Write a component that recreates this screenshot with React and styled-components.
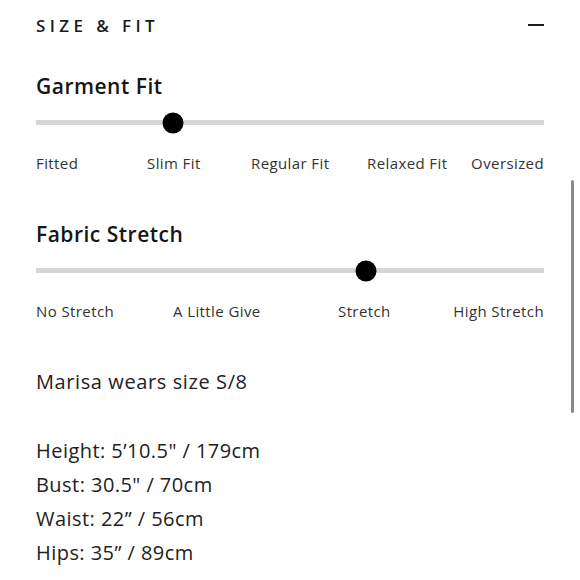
import styled, { createGlobalStyle } from 'styled-components';

const GlobalStyle = createGlobalStyle`
  html, body {
    margin: 0;
    padding: 0;
    background: #fff;
  }
  body {
    font-family: "Open Sans", "Noto Sans", sans-serif;
    color: #1a1a1a;
  }
`;

const sliders = [
  {
    title: 'Garment Fit',
    value: 27,
    cols: '111px 104px 116px 104px 1fr',
    labels: ['Fitted', 'Slim Fit', 'Regular Fit', 'Relaxed Fit', 'Oversized'],
  },
  {
    title: 'Fabric Stretch',
    value: 65,
    cols: '137px 165px 115px 1fr',
    labels: ['No Stretch', 'A Little Give', 'Stretch', 'High Stretch'],
  },
];

const measurements = [
  'Height: 5\u201910.5" / 179cm',
  'Bust: 30.5" / 70cm',
  'Waist: 22\u201d / 56cm',
  'Hips: 35\u201d / 89cm',
];

const App = () => {
  return (
    <Page>
      <GlobalStyle />
      <Header>
        <Title>SIZE &amp; FIT</Title>
        <Minus />
      </Header>
      {sliders.map((s) => (
        <Section key={s.title}>
          <Heading>{s.title}</Heading>
          <Track>
            <Thumb style={{ left: `${s.value}%` }} />
          </Track>
          <Labels $cols={s.cols}>
            {s.labels.map((l, i) => (
              <Label key={l} $last={i === s.labels.length - 1}>{l}</Label>
            ))}
          </Labels>
        </Section>
      ))}
      <Model>Marisa wears size S/8</Model>
      <List>
        {measurements.map((m) => (
          <Line key={m}>{m}</Line>
        ))}
      </List>
      <Scrollbar />
    </Page>
  );
};

const Page = styled.div`
  position: relative;
  width: 580px;
  height: 580px;
  overflow: hidden;
  padding: 0 36px;
  box-sizing: border-box;
`;

const Header = styled.div`
  display: flex;
  align-items: center;
  justify-content: space-between;
  height: 50px;
`;

const Title = styled.h2`
  margin: 0;
  font-size: 17px;
  font-weight: 600;
  letter-spacing: 4.4px;
  color: #1a1a1a;
`;

const Minus = styled.span`
  display: block;
  width: 16px;
  height: 2px;
  background: #1a1a1a;
`;

const Section = styled.div`
  padding-top: 24px;
  margin-bottom: 26px;
`;

const Heading = styled.h3`
  margin: 0;
  font-size: 21px;
  font-weight: 600;
  letter-spacing: 0.5px;
  color: #161616;
  line-height: 24px;
`;

const Track = styled.div`
  position: relative;
  height: 5px;
  margin-top: 22px;
  background: #d6d6d6;
`;

const Thumb = styled.span`
  position: absolute;
  top: 50%;
  width: 21px;
  height: 21px;
  border-radius: 50%;
  background: #000;
  transform: translate(-50%, -50%);
`;

const Labels = styled.div`
  display: grid;
  grid-template-columns: ${(p) => p.$cols};
  margin-top: 29px;
`;

const Label = styled.span`
  font-size: 15px;
  letter-spacing: 0.4px;
  color: #333;
  line-height: 18px;
  text-align: ${(p) => (p.$last ? 'right' : 'left')};
  white-space: nowrap;
`;

const Model = styled.p`
  margin: 50px 0 0;
  font-size: 20px;
  letter-spacing: 0.6px;
  color: #222;
  line-height: 24px;
`;

const List = styled.div`
  margin-top: 40px;
  display: flex;
  flex-direction: column;
`;

const Line = styled.div`
  font-size: 20px;
  letter-spacing: 0.45px;
  color: #222;
  line-height: 34px;
`;

const Scrollbar = styled.span`
  position: absolute;
  right: 6px;
  top: 180px;
  width: 3px;
  height: 233px;
  border-radius: 2px;
  background: #8a8a8a;
`;

export default App;
